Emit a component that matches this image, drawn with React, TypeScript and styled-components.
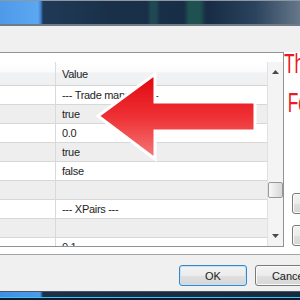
import React from "react";
import styled, { createGlobalStyle } from "styled-components";

const GlobalStyle = createGlobalStyle`
  html, body { margin: 0; padding: 0; }
  body {
    width: 300px;
    height: 300px;
    overflow: hidden;
    background: #f0f0f0;
    font-family: "Liberation Sans", Arial, sans-serif;
  }
  #root { width: 300px; height: 300px; }
`;

const Screen = styled.div`
  position: relative;
  width: 300px;
  height: 300px;
  overflow: hidden;
  display: flex;
  flex-direction: column;
`;

const TitleBar = styled.div`
  flex: 0 0 26px;
  box-sizing: border-box;
  border-top: 1px solid #8d98a4;
  border-bottom: 2px solid #6f7b88;
  background:
    linear-gradient(90deg, transparent 147px, rgba(38, 104, 96, 0.45) 151px, rgba(38, 104, 96, 0.45) 156px, transparent 160px),
    linear-gradient(90deg, transparent 184px, rgba(36, 118, 92, 0.5) 189px, rgba(36, 118, 92, 0.5) 200px, transparent 206px),
    linear-gradient(90deg, #4e9ae8 0, #5ca7f1 38px, #3d7cc4 41px, #1f3a58 43px, #1a3049 110px, #182d45 210px, #2b435d 255px, #66788a 300px);
`;

const Dialog = styled.div`
  flex: 0 0 265px;
  display: flex;
  flex-direction: column;
  padding-top: 26px;
  box-sizing: border-box;
  background: #f0f0f0;
`;

const TabPage = styled.div`
  display: flex;
  align-items: stretch;
  background: #ffffff;
  border-bottom: 1px solid #a3a3a3;
  padding-bottom: 7px;
`;

const ListBox = styled.div`
  flex: 0 0 284px;
  box-sizing: border-box;
  border: 1px solid #8e9399;
  border-left: none;
  display: flex;
  flex-direction: column;
  background: #ffffff;
`;

const TopStrip = styled.div`
  height: 9px;
  background: #ffffff;
`;

const ListBody = styled.div`
  display: flex;
  height: 184px;
`;

const Grid = styled.div`
  flex: 1;
  min-width: 0;
  display: flex;
  flex-direction: column;
  overflow: hidden;
`;

const HeaderRow = styled.div`
  flex: 0 0 24px;
  display: grid;
  grid-template-columns: 56px 1fr;
  box-sizing: border-box;
  border-bottom: 1px solid #d5d5d5;
  background: linear-gradient(#ffffff 0%, #fbfbfb 45%, #f1f2f4 46%, #eef0f2 100%);
`;

const HeaderCell = styled.div<{ $divider?: boolean }>`
  display: flex;
  align-items: center;
  padding-left: 6px;
  border-right: ${(p) => (p.$divider ? "1px solid #dcdcdc" : "none")};
  font-size: 11px;
  letter-spacing: -0.3px;
  color: #1e1e1e;
  white-space: nowrap;
  overflow: hidden;
`;

const Rows = styled.div`
  height: 160px;
  overflow: hidden;
`;

const Row = styled.div<{ $shaded: boolean }>`
  display: grid;
  grid-template-columns: 56px 1fr;
  height: 19px;
  box-sizing: border-box;
  border-bottom: 1px solid #d7d7d7;
  background: ${(p) => (p.$shaded ? "#eeeeee" : "#ffffff")};
`;

const Cell = styled.div<{ $divider?: boolean }>`
  display: flex;
  align-items: center;
  padding-left: 6px;
  border-right: ${(p) => (p.$divider ? "1px solid #d9d9d9" : "none")};
  font-size: 11px;
  letter-spacing: -0.3px;
  color: #1e1e1e;
  white-space: nowrap;
  overflow: hidden;
`;

const ScrollBar = styled.div`
  flex: 0 0 16px;
  box-sizing: border-box;
  display: flex;
  flex-direction: column;
  background: #f4f4f4;
  border-left: 1px solid #e1e1e1;
`;

const ScrollButton = styled.div`
  flex: 0 0 20px;
  display: flex;
  align-items: center;
  justify-content: center;
`;

const Track = styled.div`
  flex: 1;
`;

const Thumb = styled.div<{ $offset: number }>`
  margin-top: ${(p) => p.$offset}px;
  height: 16px;
  box-sizing: border-box;
  border: 1px solid #989898;
  border-radius: 2px;
  background: linear-gradient(90deg, #f8f8f8, #e4e4e4 60%, #d8d8d8);
`;

const SideColumn = styled.div`
  flex: 1;
  min-width: 0;
  display: flex;
  flex-direction: column;
  overflow: hidden;
`;

const Annotation = styled.div`
  margin-top: -8px;
  color: #ec1a22;
  font-size: 28px;
  line-height: 39px;
  white-space: nowrap;
`;

const AnnotationLine = styled.div<{ $indent: number }>`
  padding-left: ${(p) => p.$indent}px;
  transform: scaleX(0.62);
  transform-origin: left center;
`;

const SideButtons = styled.div`
  margin-top: auto;
  padding: 0 0 1px 8px;
  display: flex;
  flex-direction: column;
  gap: 11px;
`;

const Button = styled.button<{ $focused?: boolean }>`
  flex: 0 0 auto;
  width: 68px;
  height: 21px;
  box-sizing: border-box;
  padding: 0;
  border: 1px solid ${(p) => (p.$focused ? "#3c86c4" : "#7a7a7a")};
  border-radius: 3px;
  background: linear-gradient(#f3f3f3 0%, #ececec 50%, #e0e0e0 51%, #d6d6d6 100%);
  box-shadow: inset 0 0 0 1px ${(p) => (p.$focused ? "#bfe3f8" : "#fbfbfb")};
  font-family: "Liberation Sans", Arial, sans-serif;
  font-size: 11px;
  color: #1a1a1a;
  white-space: nowrap;
  text-align: center;
`;

const Footer = styled.div`
  display: flex;
  gap: 8px;
  padding: 10px 0 5px 179px;
  overflow: hidden;
`;

const Taskbar = styled.div`
  flex: 0 0 9px;
  box-sizing: border-box;
  border-top: 1px solid #4d555e;
  border-bottom: 2px solid #0c1a2c;
  background:
    linear-gradient(180deg, transparent 0, transparent 5px, #38c6f4 5px, #38c6f4 6px, transparent 6px),
    linear-gradient(90deg, #3f8fe4 0, #4b9bec 40px, #1d3048 43px, #17293d 100%);
`;

const ArrowOverlay = styled.svg`
  position: absolute;
  left: 92px;
  top: 68px;
  width: 170px;
  height: 98px;
  overflow: visible;
`;

const Triangle = ({ up }: { up: boolean }) => (
  <svg width="7" height="4" viewBox="0 0 7 4">
    <polygon points={up ? "0,4 7,4 3.5,0" : "0,0 7,0 3.5,4"} fill="#4a4a4a" />
  </svg>
);

const rows: string[] = [
  "--- Trade manager ---",
  "true",
  "0.0",
  "true",
  "false",
  "",
  "--- XPairs ---",
  "",
  "0.1",
];

export default function App() {
  return (
    <>
      <GlobalStyle />
      <Screen>
        <TitleBar />
        <Dialog>
          <TabPage>
            <ListBox>
              <TopStrip />
              <ListBody>
                <Grid>
                  <HeaderRow>
                    <HeaderCell $divider />
                    <HeaderCell>Value</HeaderCell>
                  </HeaderRow>
                  <Rows>
                    {rows.map((value, i) => (
                      <Row key={i} $shaded={i % 2 === 1}>
                        <Cell $divider />
                        <Cell>{value}</Cell>
                      </Row>
                    ))}
                  </Rows>
                </Grid>
                <ScrollBar>
                  <ScrollButton>
                    <Triangle up />
                  </ScrollButton>
                  <Track>
                    <Thumb $offset={100} />
                  </Track>
                  <ScrollButton>
                    <Triangle up={false} />
                  </ScrollButton>
                </ScrollBar>
              </ListBody>
            </ListBox>
            <SideColumn>
              <Annotation>
                <AnnotationLine $indent={0}>This</AnnotationLine>
                <AnnotationLine $indent={6}>For</AnnotationLine>
              </Annotation>
              <SideButtons>
                <Button>Load</Button>
                <Button>Save</Button>
              </SideButtons>
            </SideColumn>
          </TabPage>
          <Footer>
            <Button $focused>OK</Button>
            <Button>Cancel</Button>
          </Footer>
        </Dialog>
        <Taskbar />
        <ArrowOverlay viewBox="0 0 170 98">
          <defs>
            <linearGradient id="arrowFill" x1="0" y1="0" x2="0" y2="1">
              <stop offset="0" stopColor="#e0060e" />
              <stop offset="0.5" stopColor="#ee3034" />
              <stop offset="1" stopColor="#f47a7a" />
            </linearGradient>
          </defs>
          <polygon
            points="6,48 63,6 63,34 163,34 163,63 63,63 63,91"
            fill="url(#arrowFill)"
            stroke="#ffffff"
            strokeWidth="3"
            strokeLinejoin="miter"
          />
        </ArrowOverlay>
      </Screen>
    </>
  );
}
